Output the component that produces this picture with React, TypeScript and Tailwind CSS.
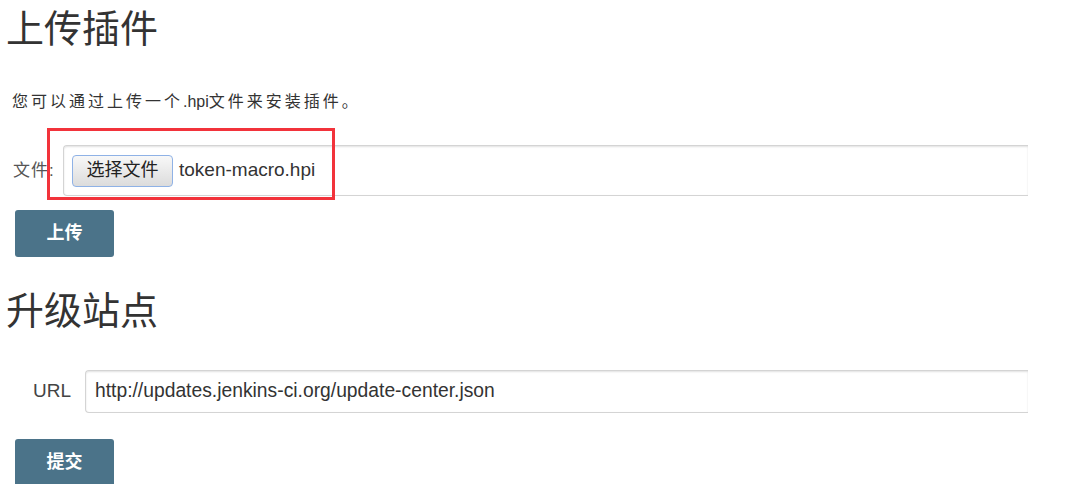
const sans = '"Liberation Sans", "Noto Sans CJK SC", sans-serif';

function ActionButton({ label }: { label: string }) {
  return (
    <button
      type="button"
      className="ml-[15px] flex h-[47px] w-[99px] items-center justify-center rounded-[3px] bg-[#4b7389] text-[18px] font-bold text-white"
    >
      {label}
    </button>
  );
}

export default function App() {
  return (
    <div
      className="relative h-[484px] w-[1080px] overflow-hidden bg-white text-[#333]"
      style={{ fontFamily: sans }}
    >
      <h1 className="ml-[6px] mt-[10px] text-[38px] font-normal leading-none text-[#333]">
        上传插件
      </h1>
      <p className="ml-[12px] mt-[44px] text-[16px] leading-[20px] tracking-[3px] text-[#333]">
        您可以通过上传一个<span className="tracking-normal">.hpi</span>文件来安装插件。
      </p>

      <div className="mt-[33px] flex items-center">
        <label className="w-[63px] whitespace-nowrap pl-[13px] text-[17px] tracking-[1px] text-[#555]">
          文件:
        </label>
        <div className="flex h-[51px] w-[965px] items-center rounded-l-[4px] border border-r-0 border-[#d4d4d4] pl-[8px] shadow-[inset_0_1px_2px_rgba(0,0,0,0.12)]">
          <span className="flex h-[32px] w-[101px] items-center justify-center rounded-[4px] border border-[#8fb2e6] bg-gradient-to-b from-[#f8f8f8] to-[#dcdcdc] text-[18px] text-[#222]">
            选择文件
          </span>
          <span className="ml-[6px] text-[19px] text-[#333]">token-macro.hpi</span>
        </div>
      </div>

      <div className="mt-[14px]">
        <ActionButton label="上传" />
      </div>

      <h2 className="ml-[6px] mt-[35px] text-[38px] font-normal leading-none text-[#333]">
        升级站点
      </h2>

      <div className="mt-[40px] flex items-center">
        <label className="w-[85px] pl-[33px] text-[19px] text-[#444]">URL</label>
        <div className="flex h-[43px] w-[943px] items-center rounded-l-[4px] border border-r-0 border-[#d4d4d4] pl-[9px] text-[19.3px] text-[#333] shadow-[inset_0_1px_2px_rgba(0,0,0,0.12)]">
          http://updates.jenkins-ci.org/update-center.json
        </div>
      </div>

      <div className="mt-[26px]">
        <ActionButton label="提交" />
      </div>

      <div className="absolute left-[47px] top-[128px] h-[72px] w-[288px] border-[3px] border-[#f2333b]" />
    </div>
  );
}
